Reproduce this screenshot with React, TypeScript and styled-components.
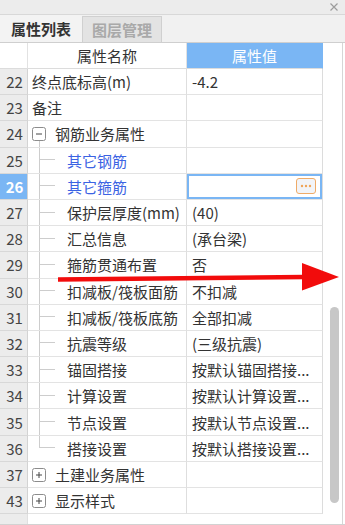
import React from 'react'
import styled, { createGlobalStyle } from 'styled-components'

const GlobalStyle = createGlobalStyle`
  html, body {
    margin: 0;
    padding: 0;
    background: #fff;
  }
  body {
    font-family: "Noto Sans CJK SC", "Noto Sans", sans-serif;
  }
`

type Item = {
  no: number
  name: string
  value?: string
  kind?: 'plain' | 'group' | 'child'
  open?: boolean
  link?: boolean
  last?: boolean
  selected?: boolean
}

const rows: Item[] = [
  { no: 22, name: '终点底标高(m)', value: '-4.2' },
  { no: 23, name: '备注' },
  { no: 24, name: '钢筋业务属性', kind: 'group', open: true },
  { no: 25, name: '其它钢筋', kind: 'child', link: true },
  { no: 26, name: '其它箍筋', kind: 'child', link: true, selected: true },
  { no: 27, name: '保护层厚度(mm)', kind: 'child', value: '(40)' },
  { no: 28, name: '汇总信息', kind: 'child', value: '(承台梁)' },
  { no: 29, name: '箍筋贯通布置', kind: 'child', value: '否' },
  { no: 30, name: '扣减板/筏板面筋', kind: 'child', value: '不扣减' },
  { no: 31, name: '扣减板/筏板底筋', kind: 'child', value: '全部扣减' },
  { no: 32, name: '抗震等级', kind: 'child', value: '(三级抗震)' },
  { no: 33, name: '锚固搭接', kind: 'child', value: '按默认锚固搭接...' },
  { no: 34, name: '计算设置', kind: 'child', value: '按默认计算设置...' },
  { no: 35, name: '节点设置', kind: 'child', value: '按默认节点设置...' },
  { no: 36, name: '搭接设置', kind: 'child', value: '按默认搭接设置...', last: true },
  { no: 37, name: '土建业务属性', kind: 'group' },
  { no: 43, name: '显示样式', kind: 'group' },
]

const COLS = '28px 159px 136px'
const LINE = '#cdcdcd'
const BLUE = '#7ab6f4'

export default function App() {
  return (
    <>
      <GlobalStyle />
      <Panel>
        <TitleBar>
          <CloseIcon viewBox="0 0 8 8">
            <path d="M0.5 0.5 L7.5 7.5 M7.5 0.5 L0.5 7.5" />
          </CloseIcon>
        </TitleBar>
        <TabBar>
          <Tab $active>属性列表</Tab>
          <Tab>图层管理</Tab>
        </TabBar>
        <Body>
          <Table>
            <HeaderRow>
              <HeadCell />
              <HeadCell>属性名称</HeadCell>
              <HeadCell $accent>属性值</HeadCell>
            </HeaderRow>
            {rows.map(r => (
              <Row key={r.no}>
                <NumCell $selected={r.selected}>{r.no}</NumCell>
                <NameCell $indent={r.kind !== 'child'}>
                  {r.kind === 'group' && (
                    <ToggleCol $open={r.open}>
                      <ExpandBox viewBox="0 0 14 14">
                        <rect x="0.5" y="0.5" width="13" height="13" rx="2" />
                        <path d="M4 7 H10" />
                        {!r.open && <path d="M7 4 V10" />}
                      </ExpandBox>
                    </ToggleCol>
                  )}
                  {r.kind === 'child' && <Guide $last={r.last} />}
                  <Label $link={r.link}>{r.name}</Label>
                </NameCell>
                <ValueCell $selected={r.selected}>
                  {r.value}
                  {r.selected && (
                    <MoreButton>
                      <svg width="12" height="4" viewBox="0 0 12 4">
                        <circle cx="2" cy="2" r="1.2" />
                        <circle cx="6" cy="2" r="1.2" />
                        <circle cx="10" cy="2" r="1.2" />
                      </svg>
                    </MoreButton>
                  )}
                </ValueCell>
              </Row>
            ))}
            <Filler>
              <FillerNum />
              <div />
            </Filler>
          </Table>
          <ScrollCol>
            <Thumb />
          </ScrollCol>
        </Body>
        <ArrowOverlay viewBox="0 0 345 525">
          <path d="M58 279.5 L305 277" />
          <polygon points="302,263 339,277 302,290.5" />
        </ArrowOverlay>
      </Panel>
    </>
  )
}

const Panel = styled.div`
  position: relative;
  width: 345px;
  height: 524px;
  border-bottom: 1px solid #d2d2d2;
  display: flex;
  flex-direction: column;
  background: #fff;
  overflow: hidden;
  font-size: 15px;
  color: #333;
`

const TitleBar = styled.div`
  height: 14px;
  flex-shrink: 0;
  background: #ececec;
  border-bottom: 1px solid #d8d8d8;
  display: flex;
  justify-content: flex-end;
  align-items: center;
  padding-right: 7px;
`

const CloseIcon = styled.svg`
  width: 8px;
  height: 8px;
  fill: none;
  stroke: #9c9c9c;
  stroke-width: 1.2;
`

const TabBar = styled.div`
  height: 27px;
  flex-shrink: 0;
  display: flex;
  align-items: flex-end;
  background: #f1f1f1;
  border-bottom: 1px solid #cfcfcf;
`

const Tab = styled.div<{ $active?: boolean }>`
  box-sizing: border-box;
  width: ${p => (p.$active ? '82px' : '80px')};
  height: ${p => (p.$active ? '27px' : '26px')};
  display: flex;
  align-items: center;
  justify-content: center;
  padding-bottom: ${p => (p.$active ? '0' : '1px')};
  font-weight: bold;
  color: ${p => (p.$active ? '#333' : '#a9a9a9')};
  background: ${p => (p.$active ? '#f3f3f3' : '#e3e3e3')};
  border: ${p => (p.$active ? 'none' : '1px solid #d0d0d0')};
  border-bottom: none;
`

const Body = styled.div`
  flex: 1;
  min-height: 0;
  display: flex;
`

const Table = styled.div`
  width: 323px;
  display: flex;
  flex-direction: column;
`

const HeaderRow = styled.div`
  display: grid;
  grid-template-columns: ${COLS};
  height: 26px;
  flex-shrink: 0;
`

const HeadCell = styled.div<{ $accent?: boolean }>`
  display: flex;
  align-items: center;
  justify-content: center;
  border-bottom: 1px solid #dcdcdc;
  border-right: 1px solid ${p => (p.$accent ? BLUE : '#e2e2e2')};
  background: ${p => (p.$accent ? BLUE : '#fff')};
  color: ${p => (p.$accent ? '#fff' : '#333')};
`

const Row = styled.div`
  display: grid;
  grid-template-columns: ${COLS};
  height: 26.2px;
  flex-shrink: 0;
`

const NumCell = styled.div<{ $selected?: boolean }>`
  display: flex;
  align-items: center;
  justify-content: center;
  padding-left: 2px;
  background: ${p => (p.$selected ? BLUE : '#ececec')};
  color: ${p => (p.$selected ? '#fff' : '#444')};
  font-weight: ${p => (p.$selected ? 'bold' : 'normal')};
  border-right: 1px solid #d3d3d3;
  border-bottom: 1px solid #d8d8d8;
`

const NameCell = styled.div<{ $indent?: boolean }>`
  display: flex;
  align-items: center;
  padding-left: ${p => (p.$indent ? '4px' : '0')};
  border-right: 1px solid #dedede;
  border-bottom: 1px solid #e3e3e3;
  white-space: nowrap;
  overflow: hidden;
`

const ToggleCol = styled.span<{ $open?: boolean }>`
  align-self: stretch;
  display: flex;
  flex-direction: column;
  width: 14px;
  margin-right: 9px;
  padding-top: 6px;
  flex-shrink: 0;

  &::after {
    content: '';
    flex: 1;
    width: 1px;
    margin-left: 7px;
    background: ${p => (p.$open ? LINE : 'transparent')};
  }
`

const ExpandBox = styled.svg`
  width: 14px;
  height: 14px;
  fill: #fff;
  stroke: #8c8c8c;
  stroke-width: 1;

  path {
    stroke: #444;
  }
`

const Guide = styled.span<{ $last?: boolean }>`
  align-self: stretch;
  width: 16px;
  margin-left: 11px;
  margin-right: 12px;
  flex-shrink: 0;
  box-sizing: border-box;
  border-left: ${p => (p.$last ? 'none' : `1px solid ${LINE}`)};

  &::after {
    content: '';
    display: block;
    box-sizing: border-box;
    height: 50%;
    border-bottom: 1px solid ${LINE};
    border-left: ${p => (p.$last ? `1px solid ${LINE}` : 'none')};
  }
`

const Label = styled.span<{ $link?: boolean }>`
  color: ${p => (p.$link ? '#3b63e3' : '#333')};
`

const ValueCell = styled.div<{ $selected?: boolean }>`
  display: flex;
  align-items: center;
  justify-content: ${p => (p.$selected ? 'flex-end' : 'flex-start')};
  padding: 0 5px;
  border-right: 1px solid #dcdcdc;
  border-bottom: 1px solid #e3e3e3;
  white-space: nowrap;
  overflow: hidden;
  box-shadow: ${p => (p.$selected ? `inset 0 0 0 2px ${BLUE}` : 'none')};
`

const MoreButton = styled.div`
  width: 20px;
  height: 16px;
  box-sizing: border-box;
  border: 1px solid #efab68;
  border-radius: 3px;
  background: #f2f4f8;
  display: flex;
  align-items: center;
  justify-content: center;
  margin-right: 1px;

  svg {
    fill: #f0a458;
  }
`

const Filler = styled.div`
  flex: 1;
  display: grid;
  grid-template-columns: 28px 1fr;
`

const FillerNum = styled.div`
  background: #ececec;
  border-right: 1px solid #e0e0e0;
`

const ScrollCol = styled.div`
  flex: 1;
  margin-right: 2px;
  border-right: 1px solid #d6d6d6;
  padding: 264px 0 0 7px;
`

const Thumb = styled.div`
  width: 9px;
  height: 196px;
  border-radius: 5px;
  background: #c7c7c7;
`

const ArrowOverlay = styled.svg`
  position: absolute;
  left: 0;
  top: 0;
  width: 345px;
  height: 525px;
  pointer-events: none;

  path {
    stroke: #f20c0c;
    stroke-width: 4.5;
    fill: none;
  }
  polygon {
    fill: #f20c0c;
  }
`
